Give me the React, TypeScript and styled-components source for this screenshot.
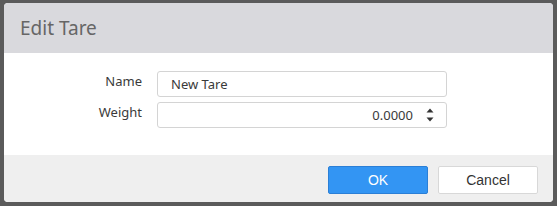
import styled, { createGlobalStyle } from "styled-components";

const Global = createGlobalStyle`
  html, body {
    margin: 0;
    padding: 0;
    background: #5b5b5b;
    font-family: "Noto Sans", "Open Sans", sans-serif;
  }
`;

const Backdrop = styled.div`
  width: 557px;
  height: 206px;
  box-sizing: border-box;
  padding: 3px 4px 4px 4px;
  background: #5b5b5b;
`;

const Dialog = styled.div`
  height: 199px;
  border-radius: 4px;
  overflow: hidden;
  background: #ffffff;
  display: flex;
  flex-direction: column;
`;

const Header = styled.div`
  height: 50px;
  background: #d9d9dd;
  display: flex;
  align-items: center;
  padding-left: 16px;
  font-size: 19px;
  color: #666666;
`;

const Body = styled.div`
  height: 102px;
  box-sizing: border-box;
  padding-top: 18px;
  display: grid;
  grid-template-columns: 138px 290px;
  column-gap: 15px;
  row-gap: 5px;
  align-content: start;
`;

const Label = styled.label`
  text-align: right;
  font-size: 13px;
  color: #3a3a3a;
  padding-top: 1px;
`;

const Field = styled.div<{ $align?: "left" | "right" }>`
  height: 26px;
  box-sizing: border-box;
  border: 1px solid #d4d4d4;
  border-radius: 3px;
  display: flex;
  align-items: center;
  justify-content: ${(p) => (p.$align === "right" ? "flex-end" : "flex-start")};
  padding: 0 12px 0 13px;
  font-size: 13px;
  color: #3a3a3a;
`;

const Spinner = styled.svg`
  margin-left: 13px;
  flex: none;
`;

const Footer = styled.div`
  flex: 1;
  background: #efefef;
  display: flex;
  justify-content: flex-end;
  align-items: center;
  gap: 10px;
  padding: 2px 15px 0 0;
`;

const Button = styled.button<{ $primary?: boolean }>`
  width: 100px;
  height: 28px;
  border-radius: 2px;
  font-family: "Liberation Sans", Arial, sans-serif;
  font-size: 14px;
  cursor: pointer;
  border: 1px solid ${(p) => (p.$primary ? "#2b7fd6" : "#d8d8d8")};
  background: ${(p) => (p.$primary ? "#3395f3" : "#ffffff")};
  color: ${(p) => (p.$primary ? "#ffffff" : "#333333")};
`;

export default function App() {
  return (
    <>
      <Global />
      <Backdrop>
        <Dialog>
          <Header>Edit Tare</Header>
          <Body>
            <Label>Name</Label>
            <Field>New Tare</Field>
            <Label>Weight</Label>
            <Field $align="right">
              0.0000
              <Spinner width="8" height="18" viewBox="0 0 8 18">
                <path d="M4 2.5 L7.5 6.5 L0.5 6.5 Z" fill="#333" />
                <path d="M0.5 11.5 L7.5 11.5 L4 15.5 Z" fill="#333" />
              </Spinner>
            </Field>
          </Body>
          <Footer>
            <Button $primary>OK</Button>
            <Button>Cancel</Button>
          </Footer>
        </Dialog>
      </Backdrop>
    </>
  );
}
